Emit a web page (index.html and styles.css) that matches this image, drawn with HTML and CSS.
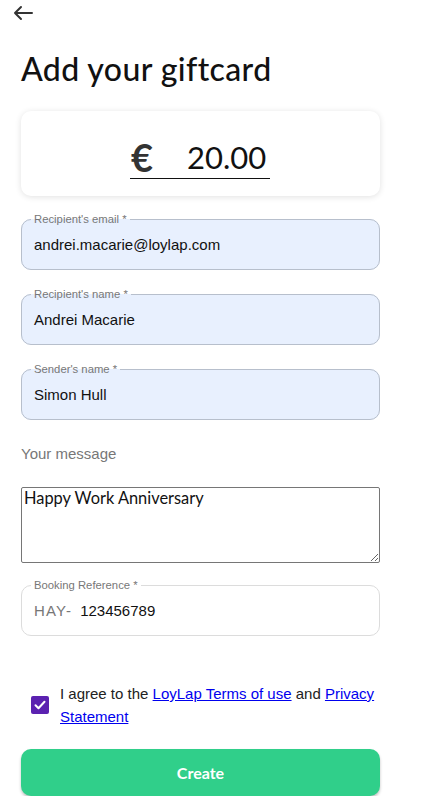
FILE: index.html
```html
<!DOCTYPE html>
<html lang="en">
<head>
<meta charset="utf-8">
<title>Add your giftcard</title>
<link rel="stylesheet" href="styles.css">
</head>
<body>
<div class="page">
  <div class="topbar">
    <svg class="back" width="22" height="16" viewBox="0 0 22 16" aria-hidden="true">
      <path d="M20 8H3M9 2L3 8l6 6" fill="none" stroke="#333" stroke-width="2" stroke-linecap="round" stroke-linejoin="round"/>
    </svg>
  </div>
  <h1 class="title">Add your giftcard</h1>

  <div class="amount-card">
    <div class="amount">
      <span class="currency">€</span>
      <span class="value">20.00</span>
    </div>
  </div>

  <fieldset class="field filled first">
    <legend>Recipient's email *</legend>
    <div class="field-value">andrei.macarie@loylap.com</div>
  </fieldset>

  <fieldset class="field filled">
    <legend>Recipient's name *</legend>
    <div class="field-value">Andrei Macarie</div>
  </fieldset>

  <fieldset class="field filled">
    <legend>Sender's name *</legend>
    <div class="field-value">Simon Hull</div>
  </fieldset>

  <div class="msg-label">Your message</div>
  <textarea class="message">Happy Work Anniversary</textarea>

  <fieldset class="field plain">
    <legend>Booking Reference *</legend>
    <div class="field-value"><span class="prefix">HAY-</span><span>123456789</span></div>
  </fieldset>

  <div class="agree">
    <span class="check">
      <svg width="12" height="10" viewBox="0 0 12 10" aria-hidden="true"><path d="M1.5 5.2l3 3 6-6.4" fill="none" stroke="#fff" stroke-width="2" stroke-linecap="round" stroke-linejoin="round"/></svg>
    </span>
    <p class="agree-text">I agree to the <a href="#">LoyLap Terms of use</a> and <a href="#">Privacy Statement</a></p>
  </div>

  <button class="create">Create</button>
</div>
</body>
</html>
```

FILE: styles.css
```css
html, body {
  margin: 0;
  padding: 0;
  background: #fff;
}
body {
  font-family: "Liberation Sans", Arial, sans-serif;
  color: #222;
}
.page {
  width: 359px;
  margin-left: 21px;
}
.topbar {
  height: 26px;
  display: flex;
  align-items: center;
  margin-left: -9px;
}
.back {
  display: block;
}
.title {
  margin: 23px 0 0;
  font-family: Lato, "Open Sans", sans-serif;
  font-weight: 500;
  font-size: 32px;
  line-height: 40px;
  color: #111;
  letter-spacing: 0.4px;
}
.amount-card {
  margin-top: 22px;
  height: 85px;
  background: #fff;
  border-radius: 10px;
  box-shadow: 0 1px 6px rgba(0,0,0,0.12);
  display: flex;
  align-items: center;
  justify-content: center;
}
.amount {
  display: flex;
  align-items: center;
  width: 140px;
  height: 42px;
  border-bottom: 1px solid #111;
  margin-left: -1px;
  margin-top: 8px;
}
.currency {
  font-family: Lato, sans-serif;
  font-weight: 700;
  font-size: 38px;
  color: #333;
  margin-left: 1px;
  width: 56px;
}
.value {
  font-family: Lato, sans-serif;
  font-size: 31px;
  color: #111;
}
.field {
  margin: 0 0 17px;
  padding: 0 12px 7px 9px;
  border: 1px solid #b7bfcc;
  border-radius: 10px;
  min-width: 0;
}
.field.first {
  margin-top: 16px;
}
.field legend {
  font-size: 11.3px;
  line-height: 14px;
  color: #777;
  padding: 0 3px;
}
.field.filled {
  background: #e8f0fe;
}
.field.plain {
  background: #fff;
  border-color: #dcdcdc;
}
.field-value {
  height: 36px;
  line-height: 38px;
  font-size: 15px;
  padding-left: 3px;
  color: #111;
}
.prefix {
  color: #777;
  letter-spacing: 1.2px;
  margin-right: 8px;
}
.msg-label {
  margin-top: 24px;
  font-size: 15px;
  color: #777;
  line-height: 20px;
}
.message {
  display: block;
  box-sizing: border-box;
  width: 359px;
  height: 76px;
  margin: 23px 0 15px;
  padding: 1px 2px;
  font-family: Lato, sans-serif;
  font-size: 16.4px;
  line-height: 18px;
  color: #111;
  border: 1px solid #767676;
  border-radius: 2px;
  resize: vertical;
}
.agree {
  display: flex;
  align-items: center;
  margin-top: 46px;
  padding-left: 10px;
}
.check {
  width: 18px;
  height: 18px;
  background: #5b21b0;
  border-radius: 2px;
  display: flex;
  align-items: center;
  justify-content: center;
  flex: none;
}
.agree-text {
  margin: 0 0 0 11px;
  font-size: 15px;
  line-height: 23px;
  color: #222;
}
.agree-text a {
  color: #0000ee;
}
.create {
  display: block;
  width: 359px;
  height: 47px;
  margin-top: 21px;
  border: none;
  border-radius: 10px;
  background: #30cf8a;
  color: #fff;
  font-family: Lato, sans-serif;
  font-weight: 700;
  font-size: 16px;
  box-shadow: 0 2px 3px rgba(0,0,0,0.25);
}
```
